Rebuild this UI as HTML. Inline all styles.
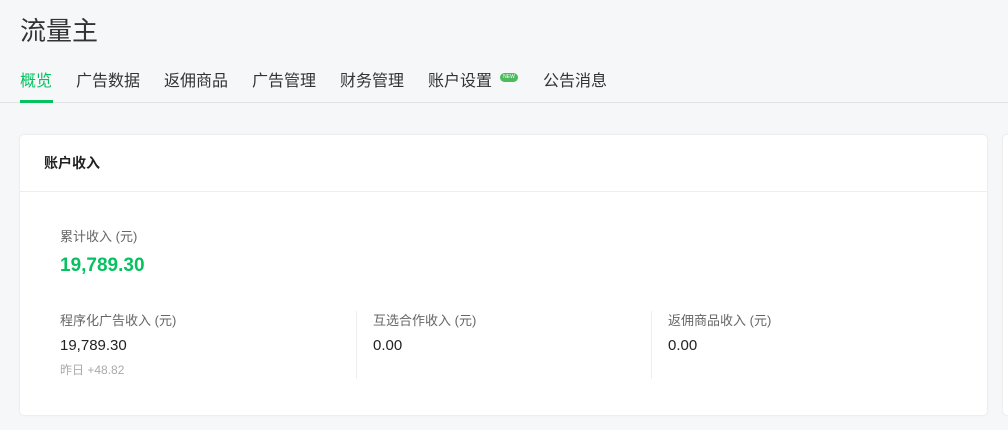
<!DOCTYPE html>
<html><head><meta charset="utf-8"><style>
*{margin:0;padding:0;box-sizing:border-box}
body{width:1008px;height:430px;background:#f6f7f9;font-family:"Liberation Sans","Noto Sans CJK SC",sans-serif;position:relative;overflow:hidden;color:#333}
.title{position:absolute;left:20px;top:14px;font-size:26px;color:#333;line-height:34px}
.tabs{position:absolute;left:0;top:0;width:1008px;height:103px;border-bottom:1px solid #e2e3e5}
.tab{position:absolute;top:71px;font-size:16px;line-height:22px;color:#333}
.active{color:#07c160}
.bar{position:absolute;left:20px;top:100px;width:33px;height:3px;background:#07c160}
.new{position:absolute;left:500px;top:73px;width:18px;height:9px;border-radius:5px;background:#4cbb5d;color:#fff;font-size:5px;line-height:9px;text-align:center}
.card{position:absolute;left:20px;top:135px;width:967px;height:280px;background:#fff;border-radius:4px;box-shadow:0 0 2px rgba(0,0,0,.12)}
.card2{position:absolute;left:1003px;top:135px;width:20px;height:280px;background:#fff;border-radius:4px;box-shadow:0 0 2px rgba(0,0,0,.12)}
.hd{height:57px;border-bottom:1px solid #eceef0;padding-left:24px;font-size:14px;font-weight:bold;line-height:57px;color:#222}
.lbl{position:absolute;font-size:13px;color:#666;line-height:18px}
.big{position:absolute;left:40px;top:120px;font-size:19px;font-weight:bold;color:#07c160}
.val{position:absolute;font-size:15px;color:#222;line-height:20px}
.sub{position:absolute;left:40px;top:226px;font-size:12px;color:#aaa}
.vl{position:absolute;top:176px;width:1px;height:68px;background:#eceef0}
</style></head><body>
<div class="tabs"></div>
<div class="title">流量主</div>
<div class="tab active" style="left:20px">概览</div>
<div class="tab" style="left:76px">广告数据</div>
<div class="tab" style="left:164px">返佣商品</div>
<div class="tab" style="left:252px">广告管理</div>
<div class="tab" style="left:340px">财务管理</div>
<div class="tab" style="left:428px">账户设置</div>
<div class="new">NEW</div>
<div class="tab" style="left:543px">公告消息</div>
<div class="bar"></div>
<div class="card">
<div class="hd">账户收入</div>
<div class="lbl" style="left:40px;top:93px">累计收入 (元)</div>
<div class="big">19,789.30</div>
<div class="lbl" style="left:40px;top:177px">程序化广告收入 (元)</div>
<div class="val" style="left:40px;top:201px">19,789.30</div>
<div class="sub">昨日 +48.82</div>
<div class="vl" style="left:336px"></div>
<div class="lbl" style="left:353px;top:177px">互选合作收入 (元)</div>
<div class="val" style="left:353px;top:201px">0.00</div>
<div class="vl" style="left:631px"></div>
<div class="lbl" style="left:648px;top:177px">返佣商品收入 (元)</div>
<div class="val" style="left:648px;top:201px">0.00</div>
</div>
<div class="card2"></div>
</body></html>
